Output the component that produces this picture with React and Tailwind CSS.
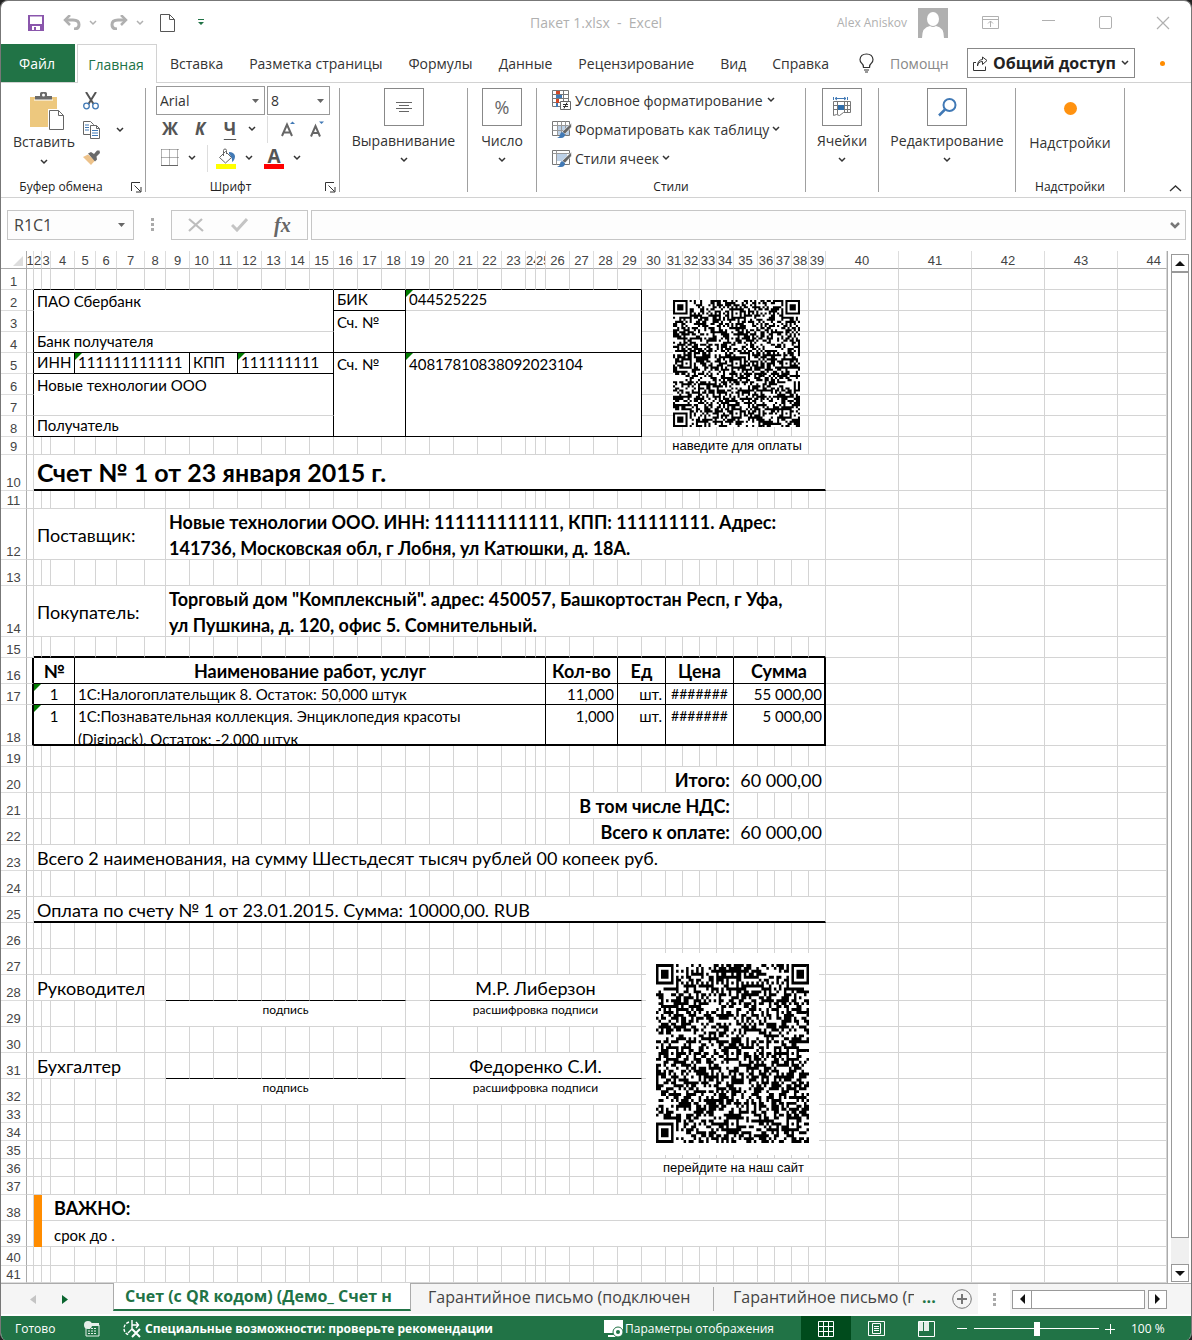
import React from "react";

/* ---------- small shared icons ---------- */

const Chev = ({ className = "text-[#333]" }) => (
  <svg width="8" height="6" viewBox="0 0 8 6" className={className} aria-hidden="true">
    <path d="M1 1l3 3 3-3" fill="none" stroke="currentColor" strokeWidth="1.500" />
  </svg>
);

const Caret = ({ className = "text-[#666]" }) => (
  <svg width="7" height="4" viewBox="0 0 7 4" className={className} aria-hidden="true">
    <path d="M0 0h7L3.500 4z" fill="currentColor" />
  </svg>
);

const Launcher = () => (
  <svg width="11" height="11" viewBox="0 0 11 11" fill="none" stroke="#333" aria-hidden="true">
    <path d="M.5 9V.5H9M3.5 3.5l6 6M10 5v5H5" />
  </svg>
);

const PasteIcon = () => (
  <svg width="36" height="40" viewBox="0 0 36 40" aria-hidden="true">
    <path d="M1 5h27v30H1z" fill="#edc87e" />
    <path d="M6 4h5V1.500Q11 0 12.500 0h4Q18 0 18 1.500V4h5v4H6z" fill="#6b6b6b" />
    <path d="M5 8h19" stroke="#fff" />
    <circle cx="14.500" cy="3" r="1.500" fill="#fff" />
    <path d="M19 17h11l6 6v16H19z" fill="#fff" />
    <path d="M20.500 18.500h9l5 5v14h-14z" fill="#fff" stroke="#666" />
    <path d="M29.500 18.500v5h5" fill="none" stroke="#666" />
  </svg>
);

const CutIcon = () => (
  <svg width="16" height="18" viewBox="0 0 16 18" fill="none" aria-hidden="true">
    <path d="M3 0l7.500 12M13 0L5.500 12" stroke="#555" strokeWidth="2" />
    <circle cx="3.500" cy="14" r="2.800" stroke="#4179b5" strokeWidth="1.300" />
    <circle cx="12.500" cy="14" r="2.800" stroke="#4179b5" strokeWidth="1.300" />
  </svg>
);

const CopyIcon = () => (
  <svg width="18" height="18" viewBox="0 0 18 18" fill="#fff" aria-hidden="true">
    <path d="M.500.500h7l3 3v10H.500z" stroke="#666" />
    <path d="M2 4h4M2 6.500h4M2 9h4" stroke="#4179b5" />
    <path d="M7.500 4.500h6l3 3v10h-9z" stroke="#666" />
    <path d="M13.500 4.500v3h3" stroke="#666" fill="none" />
    <path d="M9 9.500h6M9 12h6M9 14.500h6" stroke="#4179b5" />
  </svg>
);

const BrushIcon = () => (
  <svg width="18" height="16" viewBox="0 0 18 16" aria-hidden="true">
    <path d="M0 7l5-2.500 7 6L8 15z" fill="#edc28a" />
    <path d="M5 3.500l3-1.500 3 2 3-3.500 2.500 0 .500 2.500-3.500 3.500 .500 3-2 2z" fill="#6a6a6a" />
  </svg>
);

const BordersIcon = () => (
  <svg width="18" height="18" viewBox="0 0 18 18" fill="none" stroke="#666" aria-hidden="true">
    <path d="M.500.500h17M.500 8.500h17M.500.500v16M8.500.500v16M16.500.500v16" strokeDasharray="1 1" />
    <path d="M0 16.500h17" />
  </svg>
);

const BucketIcon = () => (
  <svg width="20" height="21" viewBox="0 0 20 21" aria-hidden="true">
    <path d="M3.500 9.500l6-6 6 6-6 5.500z" fill="#fff" stroke="#666" />
    <path d="M7.500 8V2.500Q7.500 1 9 1t1.500 1.500V6" fill="none" stroke="#666" />
    <path d="M13 4q5 0 6 4 0 4-3 6 .500-5-3-8z" fill="#4179b5" />
    <path d="M0 16h20v5H0z" fill="#ff0" />
  </svg>
);

const CondIcon = () => (
  <svg width="19" height="20" viewBox="0 0 19 20" aria-hidden="true">
    <path d="M.500.500h16v16H.500zM.500 4.500h16M.500 8.500h16M.500 12.500h16M4.500.500v16M11.500.500v16" fill="#fff" stroke="#777" />
    <path d="M4 1h4v3H4zM4 9h3v4H4z" fill="#d24726" />
    <path d="M4 5h6v3H4zM4 13h2v4H4z" fill="#4179b5" />
    <path d="M8.500 11.500h10v8h-10z" fill="#fff" stroke="#666" />
    <path d="M11 14.500h5M11 16.500h5M15 12.500l-3 6" stroke="#333" fill="none" />
  </svg>
);

const TableIcon = ({ whole }) => (
  <svg width="20" height="19" viewBox="0 0 20 19" aria-hidden="true">
    <path d="M.500 1.500h17v14H.500z" fill="#fff" stroke="#777" />
    {whole ? (
      <>
        <path d="M.500 4.500h17M4.500 1.500v14" stroke="#999" />
        <path d="M5 5h10v7H5z" fill="#bcd0e6" />
      </>
    ) : (
      <>
        <path d="M6 6h11v9H6z" fill="#bcd0e6" />
        <path d="M.500 5.500h17M.500 10.500h17M5.500 1.500v14M9.500 1.500v14M13.500 1.500v14" stroke="#999" />
      </>
    )}
    <path d="M19.500 3v4L13 14l-3-2z" fill="#666" stroke="#fff" strokeWidth=".6" />
    <path d="M10 12l3 2q0 4-4 4H5q3-1 3-3 0-2 2-3z" fill="#4179b5" />
  </svg>
);

const AlignIcon = () => (
  <svg width="16" height="11" viewBox="0 0 16 11" stroke="#666" aria-hidden="true">
    <path d="M0 .500h16M3 3.500h10M0 6.500h16M3 9.500h10" />
  </svg>
);

const CellsIcon = () => (
  <svg width="18" height="20" viewBox="0 0 18 20" fill="none" aria-hidden="true">
    <path d="M.500 0v3M14.500 0v3M2 1.500h11M4 0L2 1.500 4 3M11 0l2 1.500L11 3" stroke="#4179b5" />
    <path d="M.500 4.500h17v11M.500 4.500v14l3-1 3 1 4-3h7M.500 8.500h17M.500 12.500h17M4.500 4.500v13M11.500 4.500v11M14.500 4.500v11" stroke="#777" />
    <path d="M5 8h6v5H5z" fill="#2f6fad" />
  </svg>
);

const FindIcon = () => (
  <svg width="19" height="19" viewBox="0 0 19 19" fill="none" stroke="#4179b5" strokeWidth="2" aria-hidden="true">
    <circle cx="11.500" cy="7" r="6" />
    <path d="M7 11.500L1 17.500" strokeWidth="2.500" />
  </svg>
);

/* ---------- QR drawing ---------- */

function qrPath(seed) {
  const n = 61;
  const centres = [6, 30, 54];
  let s = seed;
  let d = "";
  const ring = (dx, dy) => Math.max(Math.abs(dx), Math.abs(dy));
  for (let y = 0; y < n; y++) {
    for (let x = 0; x < n; x++) {
      s = (s * 1103515245 + 12345) % 2147483648;
      let on = s / 2147483648 > 0.48;
      if (x === 6 || y === 6) on = (x + y) % 2 === 0;
      for (const cx of centres)
        for (const cy of centres) {
          const r = ring(x - cx, y - cy);
          if (r <= 2) on = r !== 1;
        }
      for (const [cx, cy] of [[3, 3], [57, 3], [3, 57]]) {
        const r = ring(x - cx, y - cy);
        if (r <= 4) on = r === 3 || r <= 1;
      }
      if (on) d += `M${x} ${y}h1v1h-1z`;
    }
  }
  return d;
}

const Qr = ({ seed, className, label }) => (
  <svg viewBox="0 0 61 61" preserveAspectRatio="none" className={className} role="img" aria-label={label}>
    <path d="M0 0h61v61H0z" fill="#fff" />
    <path d={qrPath(seed)} fill="#000" />
  </svg>
);

/* ---------- header ---------- */

const TitleBar = () => (
  <header className="flex h-[43px] items-center">
    <div className="flex w-[230px] items-center pl-[27px]">
      <button aria-label="Сохранить" className="w-[35px]">
        <svg width="16" height="16" viewBox="0 0 16 16" aria-hidden="true">
          <path d="M0 0h16v16H0z" fill="#8a56ac" />
          <path d="M2 1.500h12v7.500H2zM4 11h8v4H8v-3H6v3H4z" fill="#fff" />
        </svg>
      </button>
      <button aria-label="Отменить" className="w-[26px]">
        <svg width="18" height="15" viewBox="0 0 18 15" fill="none" stroke="#b0b0b0" strokeWidth="3" aria-hidden="true">
          <path d="M2 5h8q6 0 6 4.500T11 14" />
          <path d="M7 0L2 5l5 5" strokeWidth="2.500" />
        </svg>
      </button>
      <button aria-label="Список отмены" className="w-[21px]"><Chev className="text-[#b0b0b0]" /></button>
      <button aria-label="Вернуть" className="w-[26px]">
        <svg width="18" height="15" viewBox="0 0 18 15" fill="none" stroke="#b0b0b0" strokeWidth="3" aria-hidden="true">
          <path d="M16 5H8Q2 5 2 9.500T7 14" />
          <path d="M11 0l5 5-5 5" strokeWidth="2.500" />
        </svg>
      </button>
      <button aria-label="Список возврата" className="w-[24px]"><Chev className="text-[#b0b0b0]" /></button>
      <button aria-label="Создать" className="w-[38px]">
        <svg width="15" height="18" viewBox="0 0 15 18" fill="none" stroke="#555" aria-hidden="true">
          <path d="M.500.500h9l5 5v12H.500zM9.500.500v5h5" />
        </svg>
      </button>
      <button aria-label="Настройка панели быстрого доступа">
        <svg width="6" height="7" viewBox="0 0 6 7" aria-hidden="true">
          <path d="M0 0h6v1H0zM0 3h6L3 6z" fill="#217346" />
        </svg>
      </button>
    </div>
    <h1 className="flex-1 pl-[124px] text-center text-[14px] text-[#b0b0b0]">Пакет 1.xlsx&nbsp; -&nbsp; Excel</h1>
    <div className="flex items-center text-[#b0b0b0]">
      <span className="text-[12px]">Alex Aniskov</span>
      <svg width="30" height="30" viewBox="0 0 30 30" className="ml-[11px] mr-[34px]" role="img" aria-label="Alex Aniskov">
        <path d="M0 0h30v30H0z" fill="#b0b0b0" />
        <ellipse cx="15" cy="11" rx="6" ry="7" fill="#fff" />
        <path d="M4 30q0-11 8-12 3 2 6 0 8 1 8 12z" fill="#fff" />
      </svg>
      <button aria-label="Параметры отображения ленты" className="mr-[42px]">
        <svg width="18" height="14" viewBox="0 0 18 14" fill="none" stroke="currentColor" aria-hidden="true">
          <path d="M.500.500h16v12H.500zM.500 3.500h16M8.500 11V5M6 7.500L8.500 5 11 7.500" />
        </svg>
      </button>
      <button aria-label="Свернуть" className="mr-[44px]">
        <svg width="13" height="14" viewBox="0 0 13 14" stroke="currentColor" aria-hidden="true"><path d="M0 4.500h13" /></svg>
      </button>
      <button aria-label="Развернуть" className="mr-[43px]">
        <svg width="14" height="14" viewBox="0 0 14 14" fill="none" stroke="currentColor" aria-hidden="true"><rect x=".5" y=".5" width="12" height="12" rx="1.5" /></svg>
      </button>
      <button aria-label="Закрыть" className="mr-[21px]">
        <svg width="14" height="14" viewBox="0 0 14 14" stroke="currentColor" strokeWidth="1.200" aria-hidden="true"><path d="M1 1l12 12M13 1L1 13" /></svg>
      </button>
    </div>
  </header>
);

const MENU = ["Вставка", "Разметка страницы", "Формулы", "Данные", "Рецензирование", "Вид", "Справка"];

const RibbonTabs = () => (
  <nav className="flex h-[39px] items-stretch border-b border-[#d2d2d2] text-[14px] text-[#333]">
    <button className="w-[74px] bg-[#217346] pr-[2px] text-white">Файл</button>
    <button className="-mb-px ml-[2px] w-[80px] border border-b-0 border-[#d2d2d2] bg-white pr-[2px] text-[#217346]">Главная</button>
    <div className="ml-[13px] flex items-center gap-[26px] whitespace-nowrap">
      {MENU.map((m) => <button key={m}>{m}</button>)}
    </div>
    <div className="flex flex-1 items-center justify-end">
      <svg width="15" height="20" viewBox="0 0 15 20" fill="none" stroke="#333" strokeWidth="1.200" aria-hidden="true">
        <path d="M4.500 14.500q0-3-2-4.500Q1 8.500 1 6.500 1.500 1 7.500 1T14 6.500Q14 8.500 12.500 10q-2 1.500-2 4.500zM5 17h5M6 19h3" />
      </svg>
      <label className="ml-4 flex w-[62px]">
        <input aria-label="Помощник" placeholder="Помощн" className="w-full text-[14px] placeholder:text-[#888] outline-none" />
      </label>
      <button className="ml-[15px] mr-[25px] flex h-[30px] w-[168px] items-center justify-between border border-[#888] px-[5px] text-[16px] font-bold text-[#222]">
        <svg width="15" height="15" viewBox="0 0 15 15" fill="none" stroke="#333" aria-hidden="true">
          <path d="M3 6.500H.500v8h12v-4M4.500 10Q5 5.500 9.500 5.500v3L14 4.500 9.500 1v2.500Q4.500 4 4.500 10z" />
        </svg>
        Общий доступ
        <Chev />
      </button>
      <span className="mr-[26px] size-[5px] rounded-full bg-[#ff8c00]" />
    </div>
  </nav>
);

const Sep = () => <div className="mt-[5px] h-[104px] w-px shrink-0 bg-[#a0a0a0]" />;

const Group = ({ width, label, launcher, children }) => (
  <section className={`flex shrink-0 flex-col ${width}`}>
    <div className="h-[96px]">{children}</div>
    <div className="flex h-4 items-center text-[12px] text-[#222]">
      <span className={launcher ? "flex-1 pr-[10px] text-center" : "flex-1 text-center"}>{label}</span>
      {launcher && <button aria-label={launcher} className="mr-[3px]"><Launcher /></button>}
    </div>
  </section>
);

const BigButton = ({ label, children }) => (
  <button className="flex w-full flex-col items-center pt-[5px]">
    <span className="flex h-[38px] w-[40px] items-center justify-center border border-[#888] bg-white">{children}</span>
    <span className="mt-[5px] text-[14px] leading-5 text-[#333]">{label}</span>
    <span className="mt-[6px]"><Chev /></span>
  </button>
);

const Ribbon = () => (
  <div className="flex h-[115px] border-b border-[#d2d2d2]">
    <Group width="w-[144px]" label="Буфер обмена" launcher="Параметры буфера обмена">
      <div className="flex">
        <button className="ml-[5px] flex w-[76px] flex-col items-center pt-[9px]">
          <span className="pl-[5px]"><PasteIcon /></span>
          <span className="text-[14px] leading-5 text-[#333]">Вставить</span>
          <span className="mt-[7px]"><Chev /></span>
        </button>
        <div className="flex w-[28px] flex-col gap-[11px] pl-px pt-[9px]">
          <button aria-label="Вырезать"><CutIcon /></button>
          <button aria-label="Копировать"><CopyIcon /></button>
          <button aria-label="Формат по образцу"><BrushIcon /></button>
        </div>
        <button aria-label="Варианты копирования" className="ml-[6px] pt-[10px]"><Chev /></button>
      </div>
    </Group>
    <Sep />
    <Group width="w-[193px]" label="Шрифт" launcher="Параметры шрифта">
      <div className="flex gap-[2px] pl-[10px] pt-[3px] text-[14px] text-[#333]">
        <label className="grid w-[109px] items-center border border-[#999]">
          <select aria-label="Шрифт" className="col-start-1 row-start-1 h-[27px] appearance-none px-[3px] outline-none"><option>Arial</option></select>
          <span className="pointer-events-none col-start-1 row-start-1 justify-self-end pr-[5px]"><Caret /></span>
        </label>
        <label className="grid w-[63px] items-center border border-[#999]">
          <select aria-label="Размер шрифта" className="col-start-1 row-start-1 h-[27px] appearance-none px-[3px] outline-none"><option>8</option></select>
          <span className="pointer-events-none col-start-1 row-start-1 justify-self-end pr-[5px]"><Caret /></span>
        </label>
      </div>
      <div className="flex h-[28px] items-center pl-[9px] text-[17px] font-bold text-[#555]">
        <button className="w-[30px]">Ж</button>
        <button className="w-[30px] italic">К</button>
        <button className="w-[30px] underline underline-offset-4">Ч</button>
        <button aria-label="Вид подчёркивания" className="flex w-[14px] justify-center"><Chev /></button>
        <span className="ml-2 h-[27px] w-px bg-[#ddd]" />
        <button aria-label="Увеличить шрифт" className="flex w-[40px] justify-center">
          <svg width="15" height="16" viewBox="0 0 15 16" aria-hidden="true">
            <path d="M1 15L6 3.500 11 15M3 11.500h6" fill="none" stroke="#666" strokeWidth="2" />
            <path d="M9 3h5l-2.500-2.500z" fill="#4179b5" />
          </svg>
        </button>
        <button aria-label="Уменьшить шрифт" className="flex w-[18px] justify-center">
          <svg width="15" height="16" viewBox="0 0 15 16" aria-hidden="true">
            <path d="M1 15.500L5.500 5 10 15.500M3 12h5" fill="none" stroke="#666" strokeWidth="2" />
            <path d="M9 .500h5L11.500 3z" fill="#4179b5" />
          </svg>
        </button>
      </div>
      <div className="flex h-[30px] items-center pl-[9px]">
        <button aria-label="Границы" className="flex w-[30px] justify-center"><BordersIcon /></button>
        <button aria-label="Виды границ" className="flex w-[14px] justify-center"><Chev /></button>
        <span className="ml-2 h-[27px] w-px bg-[#ddd]" />
        <button aria-label="Цвет заливки" className="flex w-[36px] justify-center"><BucketIcon /></button>
        <button aria-label="Выбор заливки" className="flex w-[10px] justify-center"><Chev /></button>
        <button aria-label="Цвет текста" className="ml-[2px] flex w-[36px] justify-center">
          <span className="w-[20px] border-b-[5px] border-[#f00] text-[19px] font-bold leading-4 text-[#555]">А</span>
        </button>
        <button aria-label="Выбор цвета текста" className="flex w-[10px] justify-center"><Chev /></button>
      </div>
    </Group>
    <Sep />
    <Group width="w-[127px]"><BigButton label="Выравнивание"><AlignIcon /></BigButton></Group>
    <Sep />
    <Group width="w-[68px]"><BigButton label="Число"><span className="text-[18px] text-[#666]">%</span></BigButton></Group>
    <Sep />
    <Group width="w-[268px]" label="Стили">
      <div className="flex flex-col gap-[1px] pl-[15px] pt-[3px] text-[14px] text-[#333]">
        <button className="flex h-[28px] items-center gap-[4px]"><CondIcon />Условное форматирование<Chev /></button>
        <button className="flex h-[28px] items-center gap-[3px]"><TableIcon />Форматировать как таблицу<Chev /></button>
        <button className="flex h-[28px] items-center gap-[3px]"><TableIcon whole />Стили ячеек<Chev /></button>
      </div>
    </Group>
    <Sep />
    <Group width="w-[72px]"><BigButton label="Ячейки"><CellsIcon /></BigButton></Group>
    <Sep />
    <Group width="w-[136px]"><BigButton label="Редактирование"><FindIcon /></BigButton></Group>
    <Sep />
    <Group width="w-[108px]" label="Надстройки">
      <button className="flex w-full flex-col items-center pt-[19px]">
        <span className="size-[13px] rounded-full bg-[#ff9210]" />
        <span className="mt-[18px] text-[14px] leading-5 text-[#333]">Надстройки</span>
      </button>
    </Group>
    <Sep />
    <div className="flex flex-1 items-end justify-end pb-[5px] pr-[9px]">
      <button aria-label="Свернуть ленту">
        <svg width="13" height="7" viewBox="0 0 13 7" fill="none" stroke="#333" strokeWidth="1.300" aria-hidden="true"><path d="M1 6l5.500-5L12 6" /></svg>
      </button>
    </div>
  </div>
);

const FormulaBar = () => (
  <div className="flex h-[53px] items-start pl-[6px] pr-[5px] pt-[12px]">
    <label className="grid w-[127px] items-center border border-[#c6c6c6] bg-[#fdfdfd]">
      <input aria-label="Имя" defaultValue="R1C1" className="col-start-1 row-start-1 h-[28px] w-full px-[6px] text-[16px] text-[#444] outline-none" />
      <span className="pointer-events-none col-start-1 row-start-1 justify-self-end pr-[8px]"><Caret /></span>
    </label>
    <svg width="3" height="13" viewBox="0 0 3 13" className="mx-[17px] mt-[8px]" aria-hidden="true"><path d="M0 0h3v3H0zM0 5h3v3H0zM0 10h3v3H0z" fill="#aaa" /></svg>
    <div className="flex h-[30px] w-[137px] items-center justify-around border border-[#c6c6c6] bg-[#fdfdfd] px-[3px]">
      <button aria-label="Отмена"><svg width="16" height="14" viewBox="0 0 16 14" stroke="#bdbdbd" strokeWidth="2.200" aria-hidden="true"><path d="M1 1l14 12M14 1L1 13" /></svg></button>
      <button aria-label="Ввод"><svg width="17" height="14" viewBox="0 0 17 14" fill="none" stroke="#c4c4c4" strokeWidth="3" aria-hidden="true"><path d="M1 7l5 5L16 1" /></svg></button>
      <button className="font-['Liberation_Serif',serif] text-[20px] font-bold italic leading-5 text-[#666]">fx</button>
    </div>
    <label className="ml-[3px] grid flex-1 items-center border border-[#c6c6c6] bg-[#fdfdfd]">
      <input aria-label="Строка формул" className="col-start-1 row-start-1 h-[28px] w-full px-2 outline-none" />
      <span className="pointer-events-none col-start-1 row-start-1 justify-self-end pr-[5px]">
        <svg width="10" height="7" viewBox="0 0 10 7" fill="none" stroke="#777" strokeWidth="2.500" aria-hidden="true"><path d="M1 1l4 4 4-4" /></svg>
      </span>
    </label>
  </div>
);

/* ---------- worksheet ---------- */

const W = {
  7: "w-[7px]", 8: "w-[8px]", 9: "w-[9px]", 10: "w-[10px]", 17: "w-[17px]",
  21: "w-[21px]", 24: "w-[24px]", 28: "w-[28px]", 73: "w-[73px]", 0: "w-auto",
};
const COLS = [
  7, 8, 9, 24, 21, 21, 28, 21, 24,
  24, 24, 24, 24, 24, 24, 24, 24, 24,
  24, 24, 24, 24, 24, 10, 10,
  24, 24, 24, 24, 24, 17, 17, 17, 17, 24, 17, 17, 17, 17,
  73, 73, 73, 73, 0,
];
const H = {
  17: "h-[17px]", 18: "h-[18px]", 19: "h-[19px]", 21: "h-[21px]", 26: "h-[26px]",
  36: "h-[36px]", 41: "h-[41px]", 51: "h-[51px]",
};
const ROWS = [
  21, 21, 21, 21, 21, 21, 21, 21, 18, 36, 18, 51, 26, 51, 21, 26, 21, 41, 21,
  26, 26, 26, 26, 26, 26, 26, 26, 26, 26, 26, 26, 26,
  18, 18, 18, 18, 18, 26, 26, 19, 17,
];

/* [side, first row, last row, first column, last column, thick] */
const EDGES = [
  ["b", 1, 1, 2, 29], ["b", 4, 4, 2, 29], ["b", 8, 8, 2, 29], ["b", 5, 5, 2, 15], ["b", 2, 2, 16, 18],
  ["r", 2, 8, 1, 1], ["r", 2, 8, 15, 15], ["r", 2, 8, 18, 18], ["r", 2, 8, 29, 29],
  ["r", 5, 5, 4, 4], ["r", 5, 5, 9, 9], ["r", 5, 5, 11, 11],
  ["b", 10, 10, 2, 39, true], ["b", 25, 25, 2, 39, true],
  ["b", 15, 15, 2, 39, true], ["b", 18, 18, 2, 39, true], ["b", 16, 17, 2, 39],
  ["r", 16, 18, 1, 1, true], ["r", 16, 18, 39, 39, true],
  ["r", 16, 18, 4, 4], ["r", 16, 18, 25, 25], ["r", 16, 18, 28, 28], ["r", 16, 18, 30, 30], ["r", 16, 18, 34, 34],
  ["b", 28, 28, 9, 18], ["b", 31, 31, 9, 18], ["b", 28, 28, 20, 29], ["b", 31, 31, 20, 29],
];

function edgeClass(side, row, col) {
  const e = EDGES.find(([s, r1, r2, c1, c2]) => s === side && row >= r1 && row <= r2 && col >= c1 && col <= c2);
  if (side === "r") {
    if (!e) return "border-r border-r-[#d4d4d4]";
    return e[5] ? "border-r-2 border-r-black" : "border-r border-r-black";
  }
  if (!e) return "border-b border-b-[#d4d4d4]";
  return e[5] ? "border-b-2 border-b-black" : "border-b border-b-black";
}

const SMALL = "text-[15px] leading-[18px] pb-[2px]";
const TOP = "text-[15px] leading-5 align-top pt-[1px]";
const LINE = "text-[15px] leading-5";
const BIG = "text-[18px] leading-6 pt-[1px]";
const NOTE = "text-[12px] leading-4 text-center";
const CAPTION = "text-[13px] leading-4 text-center font-['Liberation_Sans',sans-serif]";

const Para = ({ children }) => (
  <div className="flex h-[50px] items-center pt-[2px] text-[18px] font-bold leading-[26px]"><span>{children}</span></div>
);

/* "row:column" -> [column span, row span, classes, content, flagged] */
const CELLS = {
  "2:2": [14, 2, TOP + " pl-[3px]", "ПАО Сбербанк"],
  "2:16": [3, 1, SMALL + " pl-[3px]", "БИК"],
  "2:19": [11, 1, SMALL + " pl-[3px]", "044525225", true],
  "3:16": [3, 2, TOP + " pl-[3px]", "Сч. №"],
  "3:19": [11, 2, "", ""],
  "4:2": [14, 1, SMALL + " pl-[3px]", "Банк получателя"],
  "5:2": [3, 1, SMALL + " pl-[3px]", "ИНН"],
  "5:5": [5, 1, SMALL + " pl-[3px]", "111111111111", true],
  "5:10": [2, 1, SMALL + " pl-[3px]", "КПП"],
  "5:12": [4, 1, SMALL + " pl-[3px]", "111111111", true],
  "5:16": [3, 4, TOP + " pl-[3px]", "Сч. №"],
  "5:19": [11, 4, TOP + " pl-[3px]", "40817810838092023104", true],
  "6:2": [14, 2, TOP + " pl-[3px]", "Новые технологии ООО"],
  "8:2": [14, 1, SMALL + " pl-[3px]", "Получатель"],
  "9:31": [8, 1, CAPTION, "наведите для оплаты"],
  "10:2": [38, 1, "pl-[3px] text-[25px] font-bold leading-8", "Счет № 1 от 23 января 2015 г."],
  "12:2": [7, 1, BIG + " pl-[3px] align-middle", "Поставщик:"],
  "12:9": [31, 1, "pl-[3px]", <Para>Новые технологии ООО. ИНН: 111111111111, КПП: 111111111. Адрес:<br />141736, Московская обл, г Лобня, ул Катюшки, д. 18А.</Para>],
  "14:2": [7, 1, BIG + " pl-[3px] align-middle", "Покупатель:"],
  "14:9": [31, 1, "pl-[3px]", <Para>Торговый дом "Комплексный". адрес: 450057, Башкортостан Респ, г Уфа,<br />ул Пушкина, д. 120, офис 5. Сомнительный.</Para>],
  "16:2": [3, 1, BIG + " text-center font-bold", "№"],
  "16:5": [21, 1, BIG + " text-center font-bold", "Наименование работ, услуг"],
  "16:26": [3, 1, BIG + " text-center font-bold", "Кол-во"],
  "16:29": [2, 1, BIG + " text-center font-bold", "Ед"],
  "16:31": [4, 1, BIG + " text-center font-bold", "Цена"],
  "16:35": [5, 1, BIG + " text-center font-bold", "Сумма"],
  "17:2": [3, 1, LINE + " text-center", "1", true],
  "17:5": [21, 1, LINE + " pl-[3px]", "1С:Налогоплательщик 8. Остаток: 50,000 штук"],
  "17:26": [3, 1, LINE + " pr-[3px] text-right", "11,000"],
  "17:29": [2, 1, LINE + " pr-[3px] text-right", "шт."],
  "17:31": [4, 1, "text-[14px] leading-5 text-center", "#######"],
  "17:35": [5, 1, LINE + " pr-[2px] text-right", "55 000,00"],
  "18:2": [3, 1, TOP + " text-center", "1", true],
  "18:5": [21, 1, "pl-[3px] align-top", (
    <div className="h-[39px] overflow-hidden text-[15px] leading-[23px]">1С:Познавательная коллекция. Энциклопедия красоты<br />(Digipack). Остаток: -2,000 штук</div>
  )],
  "18:26": [3, 1, TOP + " pr-[3px] text-right", "1,000"],
  "18:29": [2, 1, TOP + " pr-[3px] text-right", "шт."],
  "18:31": [4, 1, "text-[14px] leading-5 text-center align-top pt-[1px]", "#######"],
  "18:35": [5, 1, TOP + " pr-[2px] text-right", "5 000,00"],
  "20:31": [4, 1, BIG + " pr-[3px] text-right font-bold", "Итого:"],
  "20:35": [5, 1, BIG + " pr-[3px] text-right", "60 000,00"],
  "21:27": [8, 1, BIG + " pr-[3px] text-right font-bold", "В том числе НДС:"],
  "22:28": [7, 1, BIG + " pr-[3px] text-right font-bold", "Всего к оплате:"],
  "22:35": [5, 1, BIG + " pr-[3px] text-right", "60 000,00"],
  "23:2": [38, 1, BIG + " pl-[3px]", "Всего 2 наименования, на сумму Шестьдесят тысяч рублей 00 копеек руб."],
  "25:2": [38, 1, "pl-[3px] pt-[2px] text-[18px] leading-[22px]", "Оплата по счету № 1 от 23.01.2015. Сумма: 10000,00. RUB"],
  "28:2": [6, 1, BIG + " overflow-hidden pl-[3px]", "Руководитель"],
  "28:20": [10, 1, BIG + " text-center", "М.Р. Либерзон"],
  "29:9": [10, 1, NOTE + " align-top pt-[1px]", "подпись"],
  "29:20": [10, 1, NOTE + " align-top pt-[1px]", "расшифровка подписи"],
  "31:2": [6, 1, BIG + " pl-[3px]", "Бухгалтер"],
  "31:20": [10, 1, BIG + " text-center", "Федоренко С.И."],
  "32:9": [10, 1, NOTE + " align-top pt-[1px]", "подпись"],
  "32:20": [10, 1, NOTE + " align-top pt-[1px]", "расшифровка подписи"],
  "36:30": [10, 1, CAPTION, "перейдите на наш сайт"],
  "38:2": [1, 2, "bg-[#ff8c00] border-r-[#ff8c00] border-b-[#ff8c00]", ""],
  "38:3": [37, 1, BIG + " pl-[12px] font-bold", "ВАЖНО:"],
  "39:3": [37, 1, LINE + " pl-[12px] pt-[2px]", "срок до ."],
  "2:31": [1, 1, "", (
    <Qr seed={2015} label="QR-код для оплаты" className="absolute left-[7px] top-[10px] z-10 h-[127px] w-[127px] max-w-none" />
  )],
  "27:30": [1, 1, "", (
    <div className="absolute left-[4px] top-[4px] z-10 h-[202px] w-[173px] bg-white pl-[10px] pt-[11px]">
      <Qr seed={11111} label="QR-код сайта" className="h-[179px] w-[153px] max-w-none" />
    </div>
  )],
};

function buildGrid() {
  const taken = new Set();
  return ROWS.map((h, i) => {
    const row = i + 1;
    const cells = [];
    for (let col = 1; col <= COLS.length; col++) {
      if (taken.has(row + ":" + col)) continue;
      const [cs = 1, rs = 1, cls = "", content = null, flag = false] = CELLS[row + ":" + col] || [];
      for (let r = row; r < row + rs; r++)
        for (let c = col; c < col + cs; c++) taken.add(r + ":" + c);
      const borders = cls.includes("bg-[")
        ? "border-r border-b"
        : edgeClass("r", row, col + cs - 1) + " " + edgeClass("b", row + rs - 1, col);
      cells.push({ col, cs, rs, cls: cls + " " + borders, content, flag });
    }
    return { row, h, cells };
  });
}

const GRID = buildGrid();

const Sheet = () => (
  <div className="flex flex-1 items-stretch">
    <div className="min-w-0 flex-1 overflow-hidden border-r border-[#ababab]">
      <table className="w-full table-fixed border-separate border-spacing-0 whitespace-nowrap font-[Lato,Carlito,sans-serif] text-black">
        <colgroup>
          <col className="w-[26px]" />
          {COLS.map((w, i) => <col key={i} className={W[w]} />)}
        </colgroup>
        <thead className="font-['Liberation_Sans',sans-serif] text-[13px] text-[#444]">
          <tr className="h-[18px]">
            <th className="border-b border-r border-[#ababab] p-0 align-bottom">
              <svg width="10" height="10" viewBox="0 0 10 10" className="ml-auto mr-[3px] mb-[2px]" aria-label="Выделить всё"><path d="M10 0v10H0z" fill="#ddd" /></svg>
            </th>
            {COLS.map((w, i) => (
              <th key={i} scope="col" className="overflow-hidden border-b border-r border-b-[#ababab] border-r-[#ddd] p-0 align-bottom font-normal leading-[15px]">
                <div className={i === 43 ? "pr-[5px] text-right" : w === 10 ? "text-left" : "-mx-2 text-center"}>{i + 1}</div>
              </th>
            ))}
          </tr>
        </thead>
        <tbody>
          {GRID.map(({ row, h, cells }) => (
            <tr key={row} className={H[h]}>
              <th scope="row" className="border-b border-r border-b-[#ddd] border-r-[#ababab] p-0 align-bottom font-['Liberation_Sans',sans-serif] text-[13px] font-normal leading-[14px] text-[#444]">{row}</th>
              {cells.map((c) => (
                <td key={c.col} colSpan={c.cs} rowSpan={c.rs} className={"relative " + (c.content ? c.cls : "p-0 " + c.cls)}>
                  {c.flag && (
                    <svg width="7" height="7" viewBox="0 0 7 7" className="absolute left-0 top-0" aria-hidden="true"><path d="M0 0h7L0 7z" fill="#007a00" /></svg>
                  )}
                  {c.content}
                </td>
              ))}
            </tr>
          ))}
        </tbody>
      </table>
    </div>
    <div className="mb-px ml-[3px] mr-[2px] mt-[3px] flex w-[18px] flex-col bg-[#f0f0f0]">
      <button aria-label="Вверх" className="flex h-[18px] items-center justify-center border border-[#999] bg-white">
        <svg width="10" height="5" viewBox="0 0 10 5" aria-hidden="true"><path d="M0 5h10L5 0z" fill="#111" /></svg>
      </button>
      <div className="mb-[26px] flex-1 border border-[#999] bg-white" />
      <button aria-label="Вниз" className="flex h-[18px] items-center justify-center border border-[#999] bg-white">
        <svg width="10" height="5" viewBox="0 0 10 5" aria-hidden="true"><path d="M0 0h10L5 5z" fill="#111" /></svg>
      </button>
    </div>
  </div>
);

/* ---------- bottom bars ---------- */

const SheetTabs = () => (
  <div className="flex h-[33px] items-stretch border-b-2 border-b-white bg-[#f5f5f5] text-[16px] text-[#444]">
    <div className="flex w-[112px] items-center gap-[26px] border-t border-[#ababab] pl-[29px]">
      <button aria-label="Предыдущий лист"><svg width="6" height="9" viewBox="0 0 6 9" aria-hidden="true"><path d="M6 0v9L0 4.500z" fill="#c4c4c4" /></svg></button>
      <button aria-label="Следующий лист"><svg width="6" height="9" viewBox="0 0 6 9" aria-hidden="true"><path d="M0 0v9l6-4.500z" fill="#0b6530" /></svg></button>
    </div>
    <button className="mb-[3px] w-[298px] overflow-hidden whitespace-nowrap border-x border-b-2 border-x-[#ababab] border-b-[#217346] bg-white px-[11px] text-left font-bold leading-5 text-[#217346]">Счет (с QR кодом) (Демо_ Счет н</button>
    <div className="flex min-w-0 flex-1 items-center border-t border-[#ababab]">
      <button className="w-[303px] overflow-hidden whitespace-nowrap border-r border-[#ababab] pb-[4px] pl-[17px] text-left leading-5">Гарантийное письмо (подключен</button>
      <button className="ml-[19px] w-[181px] overflow-hidden whitespace-nowrap pb-[4px] text-left leading-5">Гарантийное письмо (п</button>
      <button aria-label="Все листы" className="ml-[8px] pb-[4px] font-bold leading-5 text-[#217346]">...</button>
      <div className="flex-1" />
      <button aria-label="Новый лист" className="mr-[6px]">
        <svg width="20" height="20" viewBox="0 0 20 20" fill="none" stroke="#777" aria-hidden="true"><circle cx="10" cy="10" r="9.300" /><path d="M10 5v10M5 10h10" strokeWidth="2" /></svg>
      </button>
      <div className="flex h-full w-[32px] items-center justify-center bg-white">
        <svg width="3" height="13" viewBox="0 0 3 13" aria-hidden="true"><path d="M0 0h3v3H0zM0 5h3v3H0zM0 10h3v3H0z" fill="#aaa" /></svg>
      </div>
      <button aria-label="Влево" className="ml-[2px] flex h-[19px] w-[20px] items-center justify-center border border-[#999] bg-white"><svg width="5" height="10" viewBox="0 0 5 10" aria-hidden="true"><path d="M5 0v10L0 5z" fill="#111" /></svg></button>
      <div className="h-[19px] w-[113px] border border-l-0 border-[#999] bg-white" />
      <button aria-label="Вправо" className="ml-[3px] mr-[24px] flex h-[19px] w-[19px] items-center justify-center border border-[#999] bg-white"><svg width="5" height="10" viewBox="0 0 5 10" aria-hidden="true"><path d="M0 0v10l5-5z" fill="#111" /></svg></button>
    </div>
  </div>
);

const StatusBar = () => (
  <footer className="flex h-[25px] items-center whitespace-nowrap bg-[#217346] text-[12px] text-white">
    <span className="w-[83px] pl-[14px]">Готово</span>
    <button aria-label="Запись макроса" className="w-[39px]">
      <svg width="16" height="16" viewBox="0 0 16 16" aria-hidden="true">
        <path d="M2 4h13v11H2z" fill="none" stroke="#e6efe9" /><path d="M2 2h13v3H2z" fill="#e6efe9" />
        <path d="M4 7.500h9M4 10h9M4 12.500h9" stroke="#e6efe9" strokeDasharray="2 1" />
        <circle cx="4" cy="4" r="4" fill="#e6efe9" />
      </svg>
    </button>
    <button className="flex items-center gap-[4px] font-bold">
      <svg width="18" height="18" viewBox="0 0 18 18" fill="none" stroke="#fff" strokeWidth="1.400" aria-hidden="true">
        <path d="M6 2Q1 4 1 8.500T6 15" strokeDasharray="3 1.500" /><path d="M9 0v9M9 9l-4 4M9 5h6M13 2l2.500 3L13 8" /><path d="M9 9l8 8M17 9l-8 8" strokeWidth="2" />
      </svg>
      Специальные возможности: проверьте рекомендации
    </button>
    <div className="flex-1" />
    <button className="mr-[27px] flex items-center gap-[1px]">
      <svg width="20" height="19" viewBox="0 0 20 19" aria-hidden="true">
        <path d="M0 1h19v13H0zM4 16h8v2H4z" fill="#fff" />
        <circle cx="14" cy="13" r="5" fill="#fff" stroke="#217346" /><circle cx="14" cy="13" r="2" fill="#217346" />
      </svg>
      Параметры отображения
    </button>
    <button aria-label="Обычный" className="flex h-full w-[50px] items-center justify-center bg-[#004b1c]">
      <svg width="17" height="16" viewBox="0 0 17 16" fill="none" stroke="#fff" aria-hidden="true"><path d="M.500.500h15v15H.500zM.500 5.500h15M.500 10.500h15M5.500.500v15M10.500.500v15" /></svg>
    </button>
    <button aria-label="Разметка страницы" className="flex w-[50px] justify-center">
      <svg width="17" height="15" viewBox="0 0 17 15" fill="none" stroke="#fff" aria-hidden="true"><path d="M.500.500h16v14H.500zM4.500 2.500h8v10h-8zM6 5.500h5M6 7.500h5M6 9.500h5" /></svg>
    </button>
    <button aria-label="Страничный" className="flex w-[50px] justify-center">
      <svg width="17" height="16" viewBox="0 0 17 16" fill="none" stroke="#fff" aria-hidden="true"><path d="M.500.500h16v15H.500z" /><path d="M1 1h4v9H1zM6 1h5v9H6z" fill="#e6efe9" stroke="none" /></svg>
    </button>
    <button aria-label="Уменьшить" className="ml-[6px] mr-[7px] h-px w-[10px] bg-white" />
    <input type="range" aria-label="Масштаб" defaultValue="50" className="h-[14px] w-[125px] appearance-none bg-[linear-gradient(#fff,#fff)] bg-[length:100%_1px] bg-center bg-no-repeat [&::-webkit-slider-thumb]:h-[14px] [&::-webkit-slider-thumb]:w-[6px] [&::-webkit-slider-thumb]:appearance-none [&::-webkit-slider-thumb]:bg-white" />
    <button aria-label="Увеличить" className="ml-[6px]">
      <svg width="10" height="10" viewBox="0 0 10 10" stroke="#fff" aria-hidden="true"><path d="M0 5.500h10M5.500 0v10" /></svg>
    </button>
    <span className="w-[76px] pl-[16px]">100 %</span>
  </footer>
);

export default function App() {
  return (
    <div className="min-h-screen bg-[#222]">
      <div className="flex min-h-screen flex-col overflow-hidden rounded-lg border-x border-t border-[#777] bg-white font-['Open_Sans','Noto_Sans',sans-serif]">
        <TitleBar />
        <RibbonTabs />
        <Ribbon />
        <FormulaBar />
        <Sheet />
        <SheetTabs />
        <StatusBar />
      </div>
    </div>
  );
}
